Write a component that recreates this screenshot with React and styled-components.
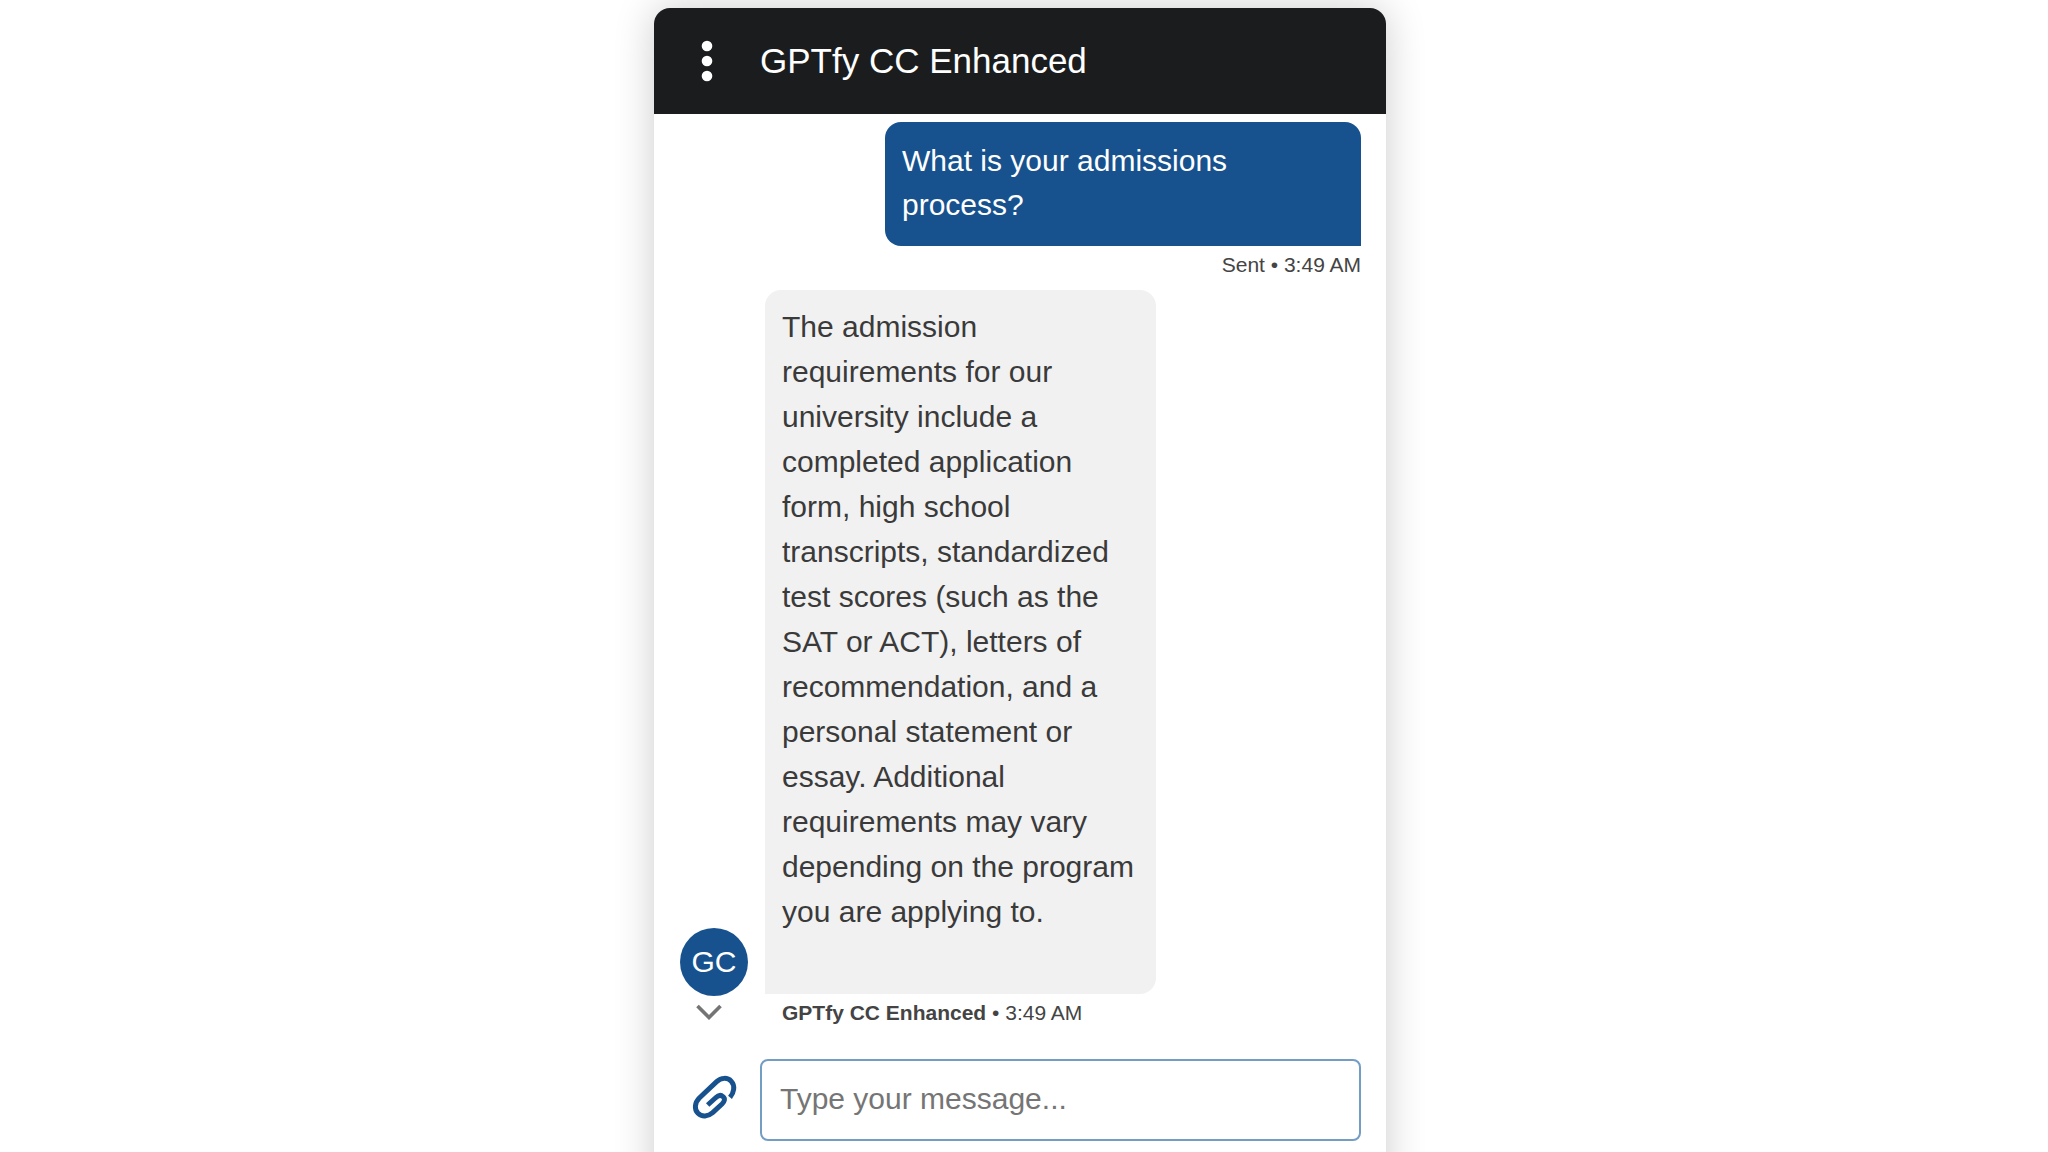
import { useState } from "react";
import styled, { createGlobalStyle } from "styled-components";

const messages = [
  {
    id: 1,
    from: "user",
    text: "What is your admissions process?",
    time: "3:49 AM",
  },
  {
    id: 2,
    from: "agent",
    name: "GPTfy CC Enhanced",
    initials: "GC",
    text: "The admission requirements for our university include a completed application form, high school transcripts, standardized test scores (such as the SAT or ACT), letters of recommendation, and a personal statement or essay. Additional requirements may vary depending on the program you are applying to.",
    time: "3:49 AM",
  },
];

export default function App() {
  const [draft, setDraft] = useState("");
  return (
    <>
      <GlobalStyle />
      <Page>
        <ChatWindow>
          <Header>
            <MenuButton type="button" aria-label="Menu">
              <svg width="12" height="42" viewBox="0 0 12 42" fill="currentColor">
                <circle cx="6" cy="6" r="5.3" />
                <circle cx="6" cy="21" r="5.3" />
                <circle cx="6" cy="36" r="5.3" />
              </svg>
            </MenuButton>
            <Title>GPTfy CC Enhanced</Title>
          </Header>

          <Conversation>
            {messages.map((m) =>
              m.from === "user" ? (
                <SentMessage key={m.id}>
                  <Bubble $sent>{m.text}</Bubble>
                  <Meta>Sent • {m.time}</Meta>
                </SentMessage>
              ) : (
                <ReceivedMessage key={m.id}>
                  <Side>
                    <Avatar>{m.initials}</Avatar>
                    <ScrollButton type="button" aria-label="Scroll down">
                      <svg width="26" height="16" viewBox="0 0 26 16" fill="none">
                        <path d="M1.5 2L13 13.5L24.5 2" stroke="currentColor" strokeWidth="3.6" />
                      </svg>
                    </ScrollButton>
                  </Side>
                  <div>
                    <Bubble>{m.text}</Bubble>
                    <Meta $indent>
                      <b>{m.name}</b> • {m.time}
                    </Meta>
                  </div>
                </ReceivedMessage>
              )
            )}
          </Conversation>

          <Composer>
            <AttachButton type="button" aria-label="Attach file">
              <svg width="52" height="52" viewBox="0 0 156 156" fill="none">
                <path
                  d="M126 76C138 62 142 41 130 28C118 15 99 17 86 29L34 78C20 92 18 112 30 124C42 136 60 134 74 122L102 96C110 88 112 80 105 74C98 67 90 70 82 78L59 99"
                  stroke="currentColor"
                  strokeWidth="15"
                />
              </svg>
            </AttachButton>
            <MessageInput
              type="text"
              aria-label="Message"
              placeholder="Type your message..."
              value={draft}
              onChange={(e) => setDraft(e.target.value)}
            />
          </Composer>
        </ChatWindow>
      </Page>
    </>
  );
}

const GlobalStyle = createGlobalStyle`
  * {
    box-sizing: border-box;
  }
  body {
    margin: 0;
    background: #fff;
    font-family: "Liberation Sans", Arial, sans-serif;
  }
  button {
    border: none;
    padding: 0;
    background: none;
    cursor: pointer;
  }
`;
const Page = styled.main`
  display: flex;
  justify-content: center;
  height: 100vh;
  padding: 8px 8px 0 0;
  overflow: hidden;
`;
const ChatWindow = styled.section`
  flex: 0 0 auto;
  width: 100%;
  max-width: 732px;
  min-height: 120vh;
  border-radius: 16px;
  background: #fff;
  box-shadow: 0 0 40px rgba(0, 0, 0, 0.2);
`;
const Header = styled.header`
  display: flex;
  align-items: center;
  height: 106px;
  padding: 0 26px;
  border-radius: 16px 16px 0 0;
  background: #1b1c1d;
  color: #fff;
`;
const MenuButton = styled.button`
  display: grid;
  place-items: center;
  width: 54px;
  height: 54px;
  color: #fff;
`;
const Title = styled.h1`
  margin: 0 26px;
  font-size: 35px;
  font-weight: 400;
`;
const Conversation = styled.div`
  display: flex;
  flex-direction: column;
  gap: 13px;
  padding: 8px 25px 0 26px;
`;
const SentMessage = styled.article`
  display: flex;
  flex-direction: column;
  align-items: flex-end;
`;
const ReceivedMessage = styled.article`
  display: flex;
  gap: 17px;
`;
const Side = styled.div`
  display: flex;
  flex-direction: column;
  justify-content: flex-end;
`;
const Avatar = styled.div`
  display: grid;
  place-items: center;
  width: 68px;
  height: 68px;
  border-radius: 50%;
  background: #17528e;
  color: #fff;
  font-size: 30px;
`;
const ScrollButton = styled.button`
  display: flex;
  justify-content: center;
  width: 58px;
  height: 29px;
  padding-top: 8px;
  color: #747474;
`;
const Bubble = styled.p`
  width: ${(p) => (p.$sent ? "476px" : "391px")};
  max-width: 100%;
  margin: 0;
  padding: ${(p) => (p.$sent ? "17px 17px 19px" : "14px 17px 60px")};
  border-radius: ${(p) => (p.$sent ? "16px 16px 0 16px" : "16px 16px 16px 0")};
  background: ${(p) => (p.$sent ? "#17528e" : "#f1f1f1")};
  color: ${(p) => (p.$sent ? "#fff" : "#3a3a3a")};
  font-size: 30px;
  line-height: ${(p) => (p.$sent ? "44px" : "45px")};
`;
const Meta = styled.p`
  margin: 7px 0 0;
  padding-left: ${(p) => (p.$indent ? "17px" : "0")};
  color: #444;
  font-size: 21px;
  line-height: 24px;
`;
const Composer = styled.form`
  display: flex;
  align-items: center;
  gap: 12px;
  padding: 34px 25px 34px 26px;
`;
const AttachButton = styled.button`
  display: grid;
  place-items: center;
  width: 68px;
  height: 68px;
  padding-bottom: 4px;
  color: #17528e;
`;
const MessageInput = styled.input`
  flex: 1;
  min-width: 0;
  height: 82px;
  padding: 0 18px 2px;
  border: 2px solid #739dc2;
  border-radius: 8px;
  background: #fff;
  color: #3a3a3a;
  font-family: inherit;
  font-size: 30px;
  &::placeholder {
    color: #757575;
  }
`;
